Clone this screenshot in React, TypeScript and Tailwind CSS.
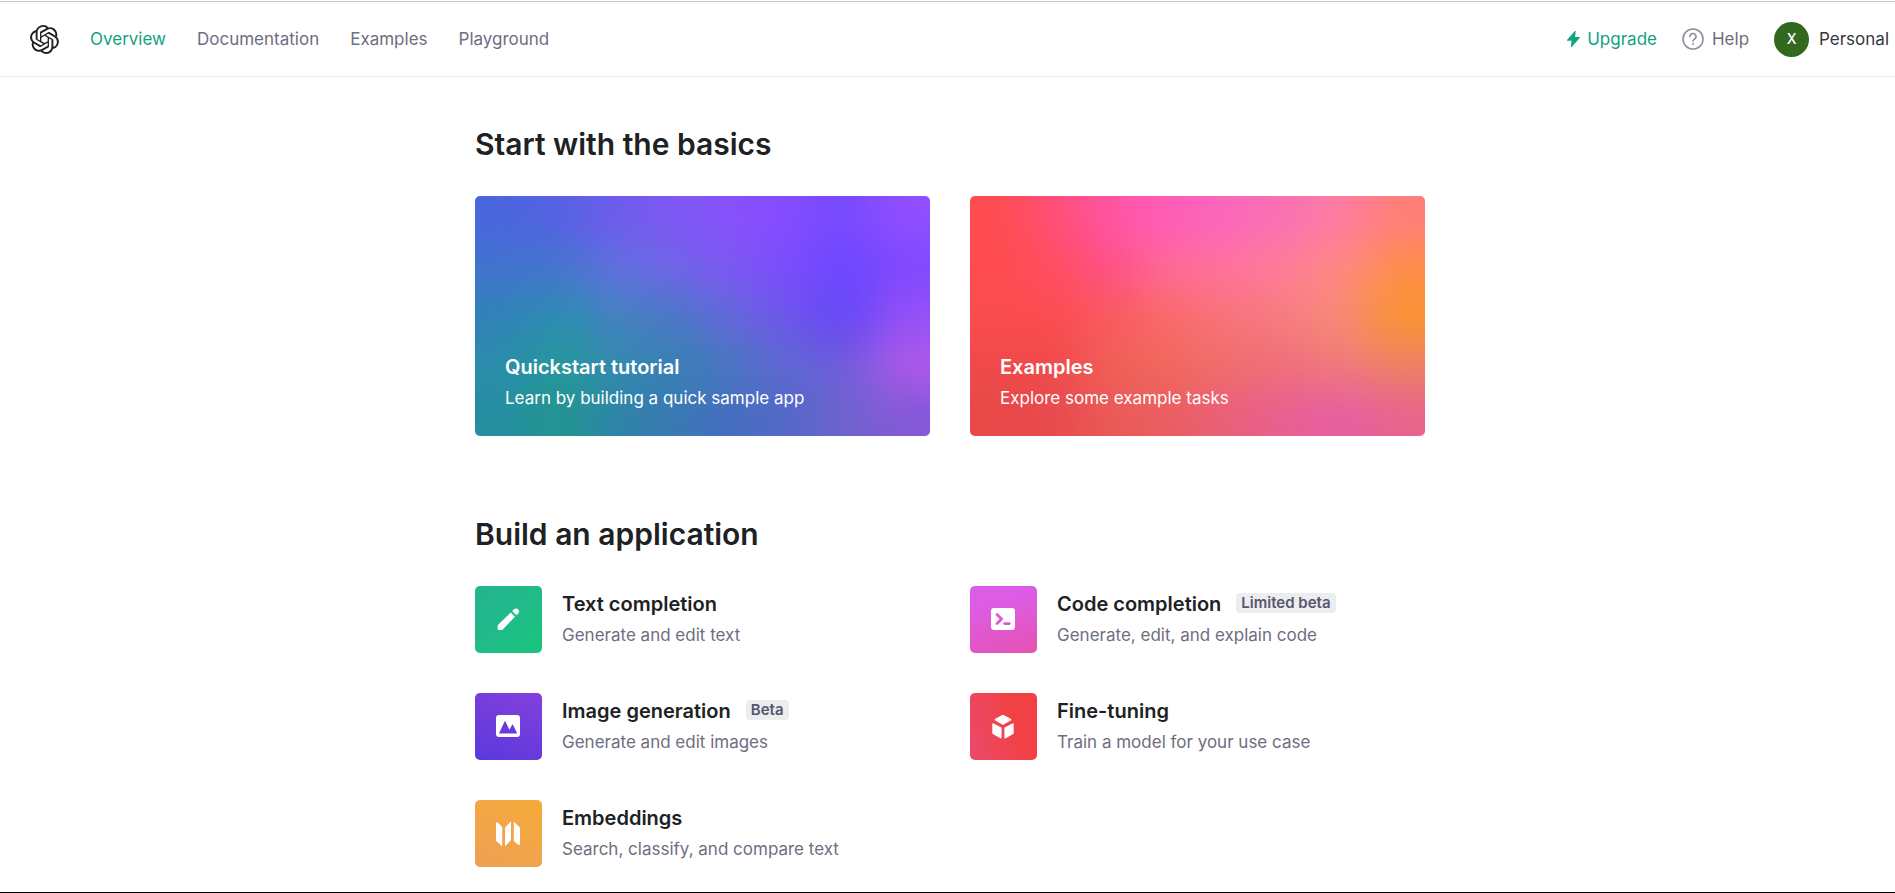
import type { ReactNode } from "react";
import { SiOpenai } from "react-icons/si";

const quickstartColors = [
  ["#4a66de", "#5662e4", "#6e5cec", "#7e58f4", "#8850fb", "#844cff", "#774aff", "#904eff"],
  ["#4174ce", "#4476cc", "#6070de", "#7064e8", "#7c58f2", "#7c4cfe", "#6a46fe", "#8049ff"],
  ["#3182b8", "#2a8eb0", "#4482c0", "#4a78c4", "#6468da", "#7054ec", "#6246f6", "#9450f6"],
  ["#2a8cac", "#249a9a", "#3488b0", "#3682b4", "#4a76c0", "#6068d4", "#6e5cdc", "#b05aea"],
  ["#258ea0", "#22968f", "#2e84a8", "#3a78b4", "#456ec0", "#5468c8", "#6e64cc", "#8458d8"],
];

const examplesColors = [
  ["#ff4c50", "#ff4f78", "#ff55a4", "#ff5cb8", "#fb68bc", "#f870b4", "#ff7ca4", "#ff7e78"],
  ["#ff4c4e", "#ff4e60", "#ff5088", "#ff6c98", "#ff729c", "#ff7c98", "#ff8a84", "#ff8f48"],
  ["#fa4c4e", "#fc4b50", "#f95c60", "#fa6a68", "#f8747a", "#f67c80", "#f88a78", "#fa9430"],
  ["#f04a4c", "#f04a4c", "#f06058", "#f2685e", "#ee6e6c", "#f07078", "#f07a7c", "#ee8262"],
  ["#e84848", "#e84a4e", "#ea5a58", "#ea5e60", "#ea607a", "#e86090", "#e65ea4", "#e8648c"],
];

function MeshBackground({ id, colors }: { id: string; colors: string[][] }) {
  const rows = colors.length;
  const cols = colors[0].length;
  const cells: ReactNode[] = [];
  for (let r = -1; r <= rows; r++) {
    for (let c = -1; c <= cols; c++) {
      const color = colors[Math.min(rows - 1, Math.max(0, r))][Math.min(cols - 1, Math.max(0, c))];
      cells.push(<rect key={`${r}:${c}`} x={c * 57} y={r * 48} width={58} height={49} fill={color} />);
    }
  }
  return (
    <svg
      className="absolute inset-0 h-full w-full"
      viewBox="0 0 456 240"
      preserveAspectRatio="none"
      aria-hidden="true"
    >
      <filter
        id={id}
        x="-60"
        y="-60"
        width="576"
        height="360"
        filterUnits="userSpaceOnUse"
        colorInterpolationFilters="sRGB"
      >
        <feGaussianBlur stdDeviation="24 20" />
      </filter>
      <g filter={`url(#${id})`}>{cells}</g>
    </svg>
  );
}

function HeroCard(props: { id: string; title: string; text: string; colors: string[][] }) {
  return (
    <a href="#" className="relative flex h-60 flex-col justify-end overflow-hidden rounded-[5px] px-[30px] pb-[23px] text-white">
      <MeshBackground id={props.id} colors={props.colors} />
      <h3 className="relative text-[20px] leading-[32px] font-semibold">{props.title}</h3>
      <p className="relative text-[17px] leading-[30px]">{props.text}</p>
    </a>
  );
}

function PencilIcon() {
  return (
    <svg width="24" height="24" viewBox="0 0 24 24" fill="#fff" aria-hidden="true">
      <path d="M14.7 5.6 1.9 18.1a1 1 0 0 0-.3.7v3.4c0 .5.3.8.8.8h3.4c.3 0 .5-.1.7-.3L18.9 9.8Z" />
      <path d="M16.2 4.1l2-2a3 3 0 0 1 4.2 4.2l-2 2Z" />
    </svg>
  );
}

function TerminalIcon() {
  return (
    <svg width="24" height="24" viewBox="0 0 24 24" aria-hidden="true">
      <rect x="0" y="1" width="24" height="22" rx="3" fill="#fff" />
      <g fill="none" stroke="#df58cf" strokeWidth="2.8" strokeLinecap="round" strokeLinejoin="round">
        <path d="m6 7.400 4.600 4.600L6 16.600" />
        <path d="M13.600 16.600h4.600" />
      </g>
    </svg>
  );
}

function PictureIcon() {
  return (
    <svg width="24" height="24" viewBox="0 0 24 24" aria-hidden="true">
      <rect x="0" y="1" width="24" height="22" rx="3" fill="#fff" />
      <path d="M3.2 19 8.6 7.6c.2-.4.6-.4.8 0l4 8.2 2.8-5c.2-.4.6-.4.8 0L21 19c.1.4-.1.6-.4.6h-17c-.4 0-.6-.2-.4-.6Z" fill="#6a3bda" />
    </svg>
  );
}

function CubeIcon() {
  return (
    <svg width="24" height="25" viewBox="0 0 24 25" fill="#fff" aria-hidden="true">
      <path d="M11.3 1.100c.5-.2.9-.2 1.400 0l7 3.700c.8.500.8 1.300 0 1.800l-7 3.900c-.5.300-.9.300-1.400 0l-7-3.900c-.8-.5-.8-1.300 0-1.800Z" />
      <path d="M2.500 9.400 9.500 12.900c.8.400 1.100.9 1.100 1.700v9c0 .8-.6 1.100-1.300.7l-6.600-3.700c-.9-.5-1.400-1.200-1.400-2.200v-8.300c0-.8.5-1.100 1.200-.7Z" />
      <path d="M21.500 9.400 14.500 12.900c-.8.400-1.100.9-1.100 1.700v9c0 .8.600 1.100 1.300.7l6.600-3.700c.9-.5 1.400-1.200 1.400-2.200v-8.300c0-.8-.5-1.100-1.200-.7Z" />
    </svg>
  );
}

function MapIcon() {
  return (
    <svg width="24" height="26" viewBox="0 0 24 26" fill="#fff" aria-hidden="true">
      <path d="M0 2.300C0 1.300 1 .9 1.800 1.500L6.200 6v19.500L.6 20.300A2 2 0 0 1 0 18.900Z" />
      <path d="M15 .5v18.600L9 25.300V6.500Z" />
      <path d="M17.800.5 23.400 6c.4.400.6.800.6 1.400v15.400c0 1-1.200 1.600-2.200.8l-4-3.700Z" />
    </svg>
  );
}

function Feature(props: { title: string; text: string; badge?: string; tile: string; icon: ReactNode }) {
  return (
    <a href="#" className="flex items-center gap-5">
      <span className={`size-[67px] shrink-0 rounded-[5px] p-[21px] ${props.tile}`}>{props.icon}</span>
      <span className="flex flex-col pb-px">
        <span className="flex items-start gap-[15px]">
          <span className="text-[20px] leading-[31px] font-semibold text-[#202123]">{props.title}</span>
          {props.badge && (
            <span className="mt-1 rounded-[4px] bg-[#ececf1] px-[5px] text-[15px] leading-5 font-semibold text-[#565869]">
              {props.badge}
            </span>
          )}
        </span>
        <span className="text-[17px] leading-[30px] text-[#6e6e80]">{props.text}</span>
      </span>
    </a>
  );
}

export default function App() {
  return (
    <div className="flex min-h-screen flex-col border-b border-black bg-white pt-px font-['Inter','Liberation_Sans',sans-serif] text-[#202123]">
      <header className="flex h-[76px] items-center justify-between border-y border-t-[#c5c9c8] border-b-[#ececec] pr-[6px] pl-[30px] text-[17px] leading-6">
        <nav className="flex items-center gap-[31px] text-[#6e6e80]">
          <a href="#" aria-label="Home" className="text-[#202123]">
            <SiOpenai size={29} />
          </a>
          <a href="#" className="text-[#10a37f]">Overview</a>
          <a href="#">Documentation</a>
          <a href="#">Examples</a>
          <a href="#">Playground</a>
        </nav>
        <div className="flex items-center gap-[25px]">
          <a href="#" className="flex items-center gap-[7px] text-[#10a37f]">
            <svg width="13" height="16" viewBox="0 0 13 16" fill="currentColor" aria-hidden="true">
              <path d="M8.700.4c.1-.5-.5-.7-.8-.3L.200 8.700c-.4.500-.1 1 .4 1h4L3.900 15.600c-.1.500.5.700.8.300L12.700 7.100c.4-.5.1-1-.4-1H8Z" />
            </svg>
            Upgrade
          </a>
          <a href="#" className="flex items-center gap-2 text-[#6e6e80]">
            <svg width="22" height="22" viewBox="0 0 22 22" fill="none" stroke="#8e8ea0" strokeWidth="1.600" strokeLinecap="round" aria-hidden="true">
              <circle cx="11" cy="11" r="10" />
              <path d="M8 8.600a3 3 0 1 1 4.500 2.500c-1 .6-1.500 1-1.500 2" />
              <circle cx="11" cy="16" r=".5" fill="#8e8ea0" strokeWidth="1" />
            </svg>
            Help
          </a>
          <button type="button" className="flex items-center gap-[10px] text-[#353740]">
            <span className="flex size-[35px] items-center justify-center rounded-full bg-[#33691e] text-[14px] font-medium text-white">
              X
            </span>
            Personal
          </button>
        </div>
      </header>
      <main className="ml-[5px] w-full max-w-[950px] self-center pt-[49px]">
        <h2 className="text-[30px] leading-9 font-semibold">Start with the basics</h2>
        <div className="mt-[34px] grid grid-cols-2 gap-10">
          <HeroCard id="mesh-quickstart" title="Quickstart tutorial" text="Learn by building a quick sample app" colors={quickstartColors} />
          <HeroCard id="mesh-examples" title="Examples" text="Explore some example tasks" colors={examplesColors} />
        </div>
        <h2 className="mt-20 text-[30px] leading-9 font-semibold">Build an application</h2>
        <div className="mt-[34px] grid grid-cols-2 gap-10">
          <Feature title="Text completion" text="Generate and edit text" tile="bg-linear-135 from-[#25b192] to-[#1ac57b]" icon={<PencilIcon />} />
          <Feature title="Code completion" text="Generate, edit, and explain code" badge="Limited beta" tile="bg-linear-165 from-[#dc5ce6] from-25% to-[#e552b2]" icon={<TerminalIcon />} />
          <Feature title="Image generation" text="Generate and edit images" badge="Beta" tile="bg-linear-20 from-[#5a38dc] to-[#8340dc]" icon={<PictureIcon />} />
          <Feature title="Fine-tuning" text="Train a model for your use case" tile="bg-linear-75 from-[#ea4a6c] to-[#f24144] to-65%" icon={<CubeIcon />} />
          <Feature title="Embeddings" text="Search, classify, and compare text" tile="bg-linear-30 from-[#f09f54] to-[#f4ab38]" icon={<MapIcon />} />
        </div>
      </main>
    </div>
  );
}
